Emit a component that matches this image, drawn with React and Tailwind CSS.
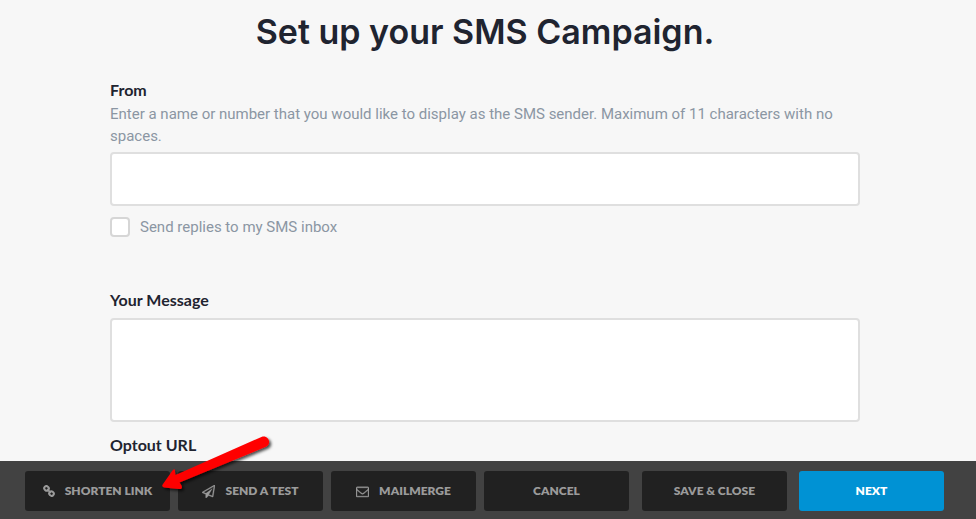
import { useState } from "react";

function LinkIcon() {
  return (
    <svg className="w-3 h-3" viewBox="0 0 12 12" fill="none" stroke="currentColor" strokeWidth="2" aria-hidden="true">
      <rect x="1.200" y="1.300" width="4.600" height="4.200" rx="2" transform="rotate(42 3.500 3.400)" />
      <rect x="6.200" y="6.500" width="4.600" height="4.200" rx="2" transform="rotate(42 8.500 8.600)" />
      <path d="M4.200 4.200l3.600 3.600" strokeWidth="1.800" />
    </svg>
  );
}

function PlaneIcon() {
  return (
    <svg
      className="w-[13px] h-[13px]"
      viewBox="0 0 1792 1792"
      fill="currentColor"
      stroke="currentColor"
      strokeWidth="50"
      aria-hidden="true"
    >
      <path d="M1764 11q33 24 27 64l-256 1536q-5 29-32 45-14 8-31 8-11 0-24-5l-527-215-298 327q-18 21-47 21-14 0-23-4-19-7-30-23.5t-11-36.5v-452l-472-193q-37-14-40-55-3-39 32-59l1664-960q35-21 68 2zm-342 1499l221-1323-1434 827 336 137 863-639-478 797z" />
    </svg>
  );
}

function MailIcon() {
  return (
    <svg
      className="w-[13px] h-[13px]"
      viewBox="0 0 1792 1792"
      fill="currentColor"
      stroke="currentColor"
      strokeWidth="50"
      aria-hidden="true"
    >
      <path d="M1664 1504v-768q-32 36-69 66-268 206-426 338-51 43-83 67t-86.500 48.500-102.500 24.500h-2q-48 0-102.500-24.500t-86.500-48.500-83-67q-158-132-426-338-37-30-69-66v768q0 13 9.500 22.500t22.500 9.500h1472q13 0 22.500-9.500t9.500-22.500zm0-1051v-24.500l-.5-13-3-12.500-5.500-9-9-7.500-14-2.500h-1472q-13 0-22.500 9.500t-9.500 22.500q0 168 147 284 193 152 401 317 6 5 35 29.500t46 37.500 44.500 31.500 50.500 27.500 43 9h2q20 0 43-9t50.500-27.500 44.500-31.500 46-37.500 35-29.500q208-165 401-317 54-43 100.500-115.500t46.500-131.500zm128-37v1088q0 66-47 113t-113 47h-1472q-66 0-113-47t-47-113v-1088q0-66 47-113t113-47h1472q66 0 113 47t47 113z" />
    </svg>
  );
}

// Red pointer over the "Shorten link" button
function Arrow() {
  return (
    <svg
      className="absolute left-[155px] -top-7 w-[125px] h-[64px] pointer-events-none"
      viewBox="0 0 125 64"
      aria-hidden="true"
    >
      <defs>
        <filter id="shadow" x="-10%" y="-10%" width="130%" height="140%">
          <feDropShadow dx="2" dy="2" stdDeviation="1.500" floodColor="#000" floodOpacity="0.7" />
        </filter>
      </defs>
      <path
        d="M8 51L17.500 37.500Q20.500 34.500 20 39L20.500 42L107 3.700C113 2 117 10 111.500 13.500L24.500 49.500L26.500 52.500Q28 56 24 56L9 54.500Q6 53.500 8 51Z"
        fill="#ff0000"
        filter="url(#shadow)"
      />
    </svg>
  );
}

function BarButton({ icon, children, primary }) {
  return (
    <button
      type="button"
      className={
        primary
          ? "w-[145px] h-10 rounded-[3px] flex items-center justify-center bg-[#0092d4] text-white text-xs font-extrabold uppercase"
          : "w-[145px] h-10 rounded-[3px] flex items-center justify-center gap-2.5 bg-[#212121] text-[#9b9b9b] text-xs font-extrabold uppercase"
      }
    >
      {icon}
      <span>{children}</span>
    </button>
  );
}

export default function App() {
  const [from, setFrom] = useState("");
  const [message, setMessage] = useState("");
  const [replies, setReplies] = useState(false);

  return (
    <div className="h-screen flex flex-col bg-[#f7f7f7] font-['Lato',sans-serif] text-[#1f2430]">
      <main className="flex-1 min-h-0 overflow-hidden pr-1.5">
        <form className="max-w-[750px] mx-auto pt-2">
          <h1 className="text-center text-[34px] leading-[48px] font-semibold font-['Inter',sans-serif] whitespace-nowrap">
            Set up your SMS Campaign.
          </h1>

          <label htmlFor="from" className="block mt-[23px] text-base leading-[22px] font-bold">
            From
          </label>
          <p className="mt-0.5 text-[15px] leading-[22px] text-[#8b96a3] font-['Roboto',sans-serif]">
            Enter a name or number that you would like to display as the SMS sender. Maximum of 11
            characters with no spaces.
          </p>
          <input
            id="from"
            type="text"
            value={from}
            onChange={(e) => setFrom(e.target.value)}
            className="block w-full h-[54px] mt-[5px] px-4 bg-white border-2 border-[#dfdfdf] rounded outline-none"
          />

          <label className="flex items-center gap-2.5 mt-2.5 text-[15px] leading-[22px] text-[#8b96a3] font-['Roboto',sans-serif]">
            <input
              type="checkbox"
              checked={replies}
              onChange={(e) => setReplies(e.target.checked)}
              className="appearance-none w-5 h-5 bg-white border-2 border-[#d6d6d6] rounded checked:bg-[#0092d4]"
            />
            Send replies to my SMS inbox
          </label>

          <label htmlFor="message" className="block mt-[51px] text-base leading-[22px] font-bold">
            Your Message
          </label>
          <textarea
            id="message"
            value={message}
            onChange={(e) => setMessage(e.target.value)}
            className="block w-full h-[104px] mt-[7px] px-4 py-3 bg-white border-2 border-[#dfdfdf] rounded outline-none resize-none"
          />

          <label htmlFor="optout" className="block mt-3 text-base leading-[22px] font-bold">
            Optout URL
          </label>
          <input
            id="optout"
            type="text"
            className="block w-full h-[54px] mt-1.5 px-4 bg-white border-2 border-[#dfdfdf] rounded outline-none"
          />
        </form>
      </main>

      <footer className="relative shrink-0 flex justify-between bg-[#424242] pt-2.5 pb-2 pl-[25px] pr-8">
        <div className="flex gap-2">
          <BarButton icon={<LinkIcon />}>Shorten link</BarButton>
          <BarButton icon={<PlaneIcon />}>Send a test</BarButton>
          <BarButton icon={<MailIcon />}>Mailmerge</BarButton>
          <BarButton>Cancel</BarButton>
        </div>
        <div className="flex gap-3">
          <BarButton>Save &amp; Close</BarButton>
          <BarButton primary>Next</BarButton>
        </div>
        <Arrow />
      </footer>
    </div>
  );
}
